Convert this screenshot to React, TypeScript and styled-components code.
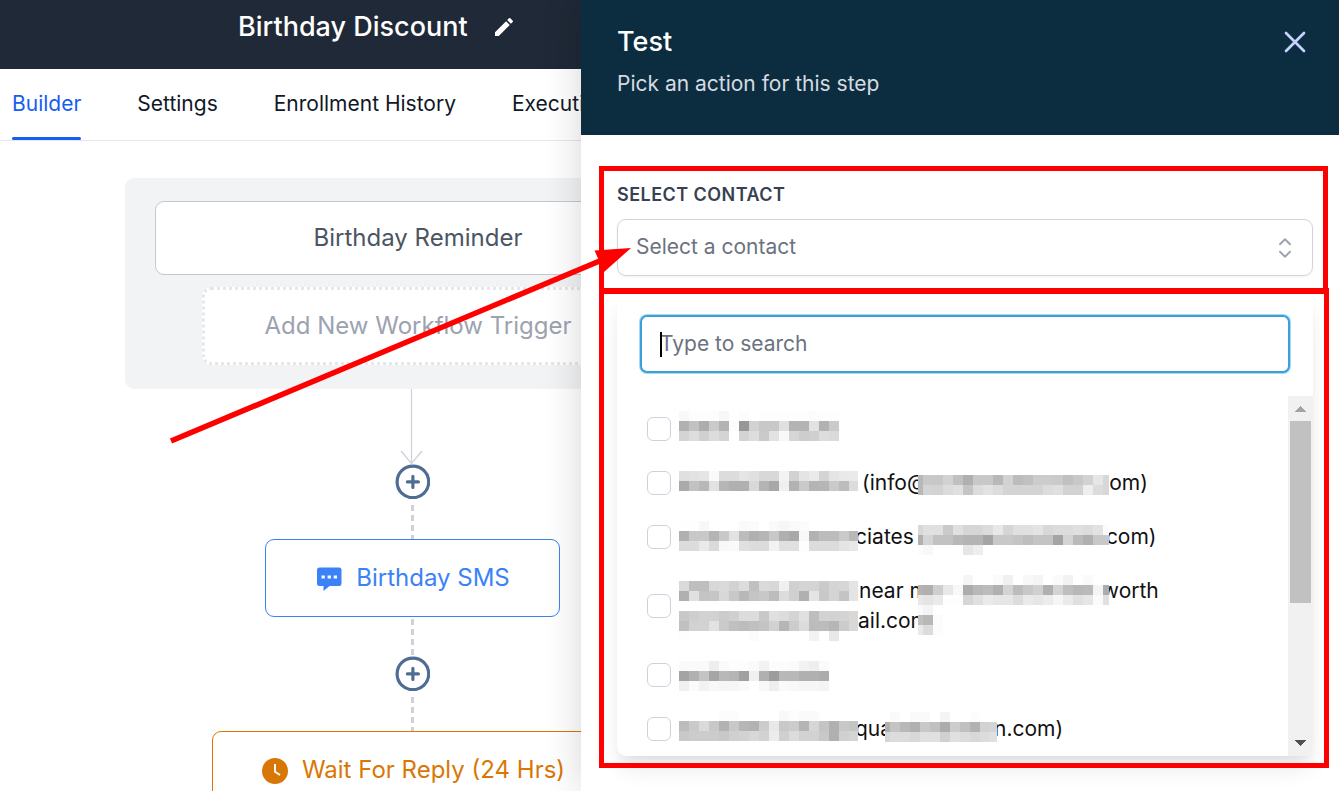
import React from "react";
import styled, { createGlobalStyle } from "styled-components";
import { MdEdit } from "react-icons/md";

const GlobalStyle = createGlobalStyle`
  *, *::before, *::after { box-sizing: border-box; }
  body { margin: 0; background: #fff; font-family: Inter, "Liberation Sans", sans-serif; }
  button, input, select { font: inherit; }
`;

const Page = styled.div`
  position: relative;
  display: flex;
  height: 100vh;
  overflow: hidden;
`;

/* ---------- workflow side ---------- */

const Workspace = styled.main`
  flex: 1;
  min-width: 0;
  overflow: hidden;
  white-space: nowrap;
`;

const TitleBar = styled.header`
  display: flex;
  align-items: flex-start;
  gap: 24px;
  height: 69px;
  padding: 11px 0 0 238px;
  background: #1f2937;
  color: #fff;
`;

const WorkflowName = styled.h1`
  margin: 0;
  font-size: 27px;
  line-height: 32px;
  font-weight: 500;
`;

const IconButton = styled.button`
  display: flex;
  padding: 0;
  border: 0;
  background: none;
  color: inherit;
  cursor: pointer;
`;

const EditButton = styled(IconButton)`
  margin-top: 4px;
`;

const Tabs = styled.nav`
  display: flex;
  gap: 56px;
  height: 72px;
  padding-left: 12px;
  border-bottom: 1px solid #e5e7eb;
`;

const Tab = styled.a<{ $active?: boolean }>`
  display: flex;
  align-items: center;
  position: relative;
  padding-bottom: 2px;
  font-size: 21px;
  line-height: 30px;
  text-decoration: none;
  color: ${(p) => (p.$active ? "#155eef" : "#111827")};

  &::after {
    content: "";
    position: absolute;
    inset: auto 0 0;
    height: 3px;
    border-radius: 2px;
    background: ${(p) => (p.$active ? "#155eef" : "transparent")};
  }
`;

const Canvas = styled.section`
  display: flex;
  flex-direction: column;
  align-items: center;
  width: 574px;
  margin: 37px 0 0 125px;
`;

const TriggerGroup = styled.div`
  display: flex;
  flex-direction: column;
  align-items: center;
  gap: 12px;
  width: 100%;
  padding: 23px 30px 24px;
  border-radius: 9px;
  background: #f2f3f5;
`;

const TriggerButton = styled.button<{ $dotted?: boolean }>`
  width: ${(p) => (p.$dotted ? "420px" : "100%")};
  height: ${(p) => (p.$dotted ? "78px" : "74px")};
  padding: 0 0 0 12px;
  border: ${(p) => (p.$dotted ? "3px dotted #e5e7eb" : "1px solid #c3c9d0")};
  border-radius: 9px;
  background: #fff;
  color: ${(p) => (p.$dotted ? "#9ca3af" : "#4b5563")};
  font-size: 24px;
  line-height: 30px;
`;

const StepButton = styled.button<{ $color: string; $wide?: boolean }>`
  display: flex;
  align-items: center;
  justify-content: center;
  flex-shrink: 0;
  gap: 14px;
  width: ${(p) => (p.$wide ? "400px" : "295px")};
  height: 78px;
  padding: 0 0 0 3px;
  border: 1px solid ${(p) => p.$color};
  border-radius: 9px;
  background: #fff;
  color: ${(p) => p.$color};
  font-size: 24px;
  line-height: 30px;
`;

const DashedLine = styled.div<{ $gap: number }>`
  width: 3px;
  height: 34px;
  margin-top: ${(p) => p.$gap}px;
  background: repeating-linear-gradient(#d1d1d9 0 6px, transparent 6px 10px);
`;

const LongDashedLine = styled(DashedLine)`
  height: 37px;
`;

const AddButton = styled(IconButton)`
  flex-shrink: 0;
`;

const AddStep = () => (
  <AddButton aria-label="Add step">
    <svg width="36" height="35" viewBox="0 0 36 35" fill="none" stroke="#4f6d94" strokeLinecap="round">
      <circle cx="18.900" cy="17.900" r="15.800" strokeWidth="3.200" fill="#fff" />
      <path d="M18.900 12.400v11M13.400 17.900h11" strokeWidth="3.200" />
    </svg>
  </AddButton>
);

/* ---------- drawer ---------- */

const Drawer = styled.aside`
  position: relative;
  flex: 0 0 758px;
  background: #fff;
  box-shadow: 0 0 36px rgba(0, 0, 0, 0.17);
`;

const DrawerHeader = styled.header`
  display: flex;
  justify-content: space-between;
  align-items: flex-start;
  height: 135px;
  padding: 24px 26px 0 36px;
  background: #0c2d40;
`;

const DrawerTitle = styled.h2`
  margin: 0;
  font-size: 27px;
  line-height: 36px;
  font-weight: 500;
  color: #fff;
`;

const DrawerHint = styled.p`
  margin: 9px 0 0;
  font-size: 21px;
  line-height: 30px;
  color: #d5dbe1;
`;

const CloseButton = styled(IconButton)`
  color: #c7d2fe;
`;

const DrawerBody = styled.div`
  padding: 45px 26px 0 36px;
`;

const Highlighted = styled.div`
  position: relative;
`;

const Highlight = styled.div<{ $inset: string; $top?: number }>`
  position: absolute;
  inset: ${(p) => p.$inset};
  border: 5px solid #f00;
  border-top-width: ${(p) => p.$top ?? 5}px;
  pointer-events: none;
`;

const FieldLabel = styled.label`
  display: block;
  margin-bottom: 9px;
  font-size: 18px;
  line-height: 30px;
  font-weight: 600;
  letter-spacing: 0.025em;
  color: #374151;
`;

const SelectWrap = styled.div`
  position: relative;
`;

const ContactSelect = styled.select`
  display: block;
  width: 100%;
  height: 57px;
  padding: 0 60px 2px 18px;
  border: 1px solid #d1d5db;
  border-radius: 9px;
  background: #fff;
  box-shadow: 0 1px 3px rgba(0, 0, 0, 0.05);
  appearance: none;
  font-size: 21px;
  color: #6b7280;
`;

const SelectArrows = styled.svg`
  position: absolute;
  right: 13px;
  top: 14px;
  pointer-events: none;
`;

const Menu = styled.div`
  margin-top: 18px;
  border-radius: 9px;
  background: #fff;
  box-shadow: 0 15px 23px -4px rgba(0, 0, 0, 0.1), 0 6px 9px -3px rgba(0, 0, 0, 0.05);
`;

const SearchWrap = styled.div`
  position: relative;
  padding: 21px 23px 23px;
`;

const SearchInput = styled.input`
  display: block;
  width: 100%;
  height: 58px;
  padding: 0 18px 2px;
  border: 2px solid #3ba0da;
  border-radius: 7px;
  outline: 0;
  box-shadow: 0 0 0 1px #a9d6f0;
  font-size: 21px;
  color: #111827;

  &::placeholder {
    color: #6b7280;
    opacity: 1;
  }
`;

const Caret = styled.span`
  position: absolute;
  left: 43px;
  top: 38px;
  width: 2px;
  height: 25px;
  background: #000;
`;

const ListArea = styled.div`
  display: flex;
  height: 360px;
  overflow: hidden;
  border-radius: 0 0 9px 9px;
`;

const ContactList = styled.ul`
  flex: 1;
  margin: 0;
  padding: 6px 0 0 30px;
  list-style: none;
`;

const ContactRow = styled.label`
  display: flex;
  align-items: center;
  gap: 8px;
  padding: 12px 0;
  font-size: 21px;
  line-height: 30px;
  color: #111;
`;

const Checkbox = styled.input`
  flex-shrink: 0;
  width: 24px;
  height: 24px;
  margin: 0;
  border: 1px solid #d1d1dc;
  border-radius: 6px;
  background: #fff;
  appearance: none;
`;

const Line = styled.span`
  display: flex;
  align-items: flex-start;
  height: 30px;
  white-space: pre;
`;

const MosaicSvg = styled.svg<{ $top: number; $before: number; $after: number }>`
  position: relative;
  z-index: 1;
  flex-shrink: 0;
  margin: ${(p) => p.$top}px ${(p) => p.$after}px 0 ${(p) => p.$before}px;
`;

const ScrollTrack = styled.div`
  display: flex;
  flex-direction: column;
  align-items: center;
  width: 25px;
  background: #f1f1f1;
`;

const ScrollThumb = styled.div`
  width: 21px;
  height: 182px;
  margin-bottom: auto;
  background: #c1c1c1;
`;

const ArrowOverlay = styled.svg`
  position: absolute;
  left: 165px;
  top: 240px;
  pointer-events: none;
`;

type MosaicProps = {
  rows: string[];
  width: number;
  first?: number;
  top?: number;
  before?: number;
  after?: number;
};

/* Greyed-out blocks that hide a name or an address; each pair is one grey level. */
const Mosaic = ({ rows, width, first = 10, top = 0, before = 0, after = 0 }: MosaicProps) => (
  <MosaicSvg
    width={width}
    height={rows.length * 10}
    shapeRendering="crispEdges"
    aria-hidden="true"
    $top={top}
    $before={before}
    $after={after}
  >
    {rows.map((row, y) =>
      row.split(" ").map((g, i) => (
        <rect
          key={`${y}-${i}`}
          x={i === 0 ? 0 : first + (i - 1) * 10}
          y={y * 10}
          width={i === 0 ? first : 10}
          height="10"
          fill={`#${g}${g}${g}`}
          fillOpacity={g === "ff" ? 0 : 1}
        />
      ))
    )}
  </MosaicSvg>
);

const contacts: React.ReactNode[] = [
  <Line>
    <Mosaic
      width={160}
      top={-3}
      rows={[
        "f8 fd fd fd f7 ff fc ff fd fd fd fe fd fc fd fd",
        "b1 c1 ad ca b3 fc 97 d2 c8 c8 e0 b4 b4 e2 b2 ca",
        "d4 dd d0 dc d4 ff d4 dd ca e2 f8 d6 cd cf dd da",
      ]}
    />
  </Line>,
  <Line>
    <Mosaic
      width={179}
      top={3}
      after={4}
      rows={[
        "e0 e2 e5 fa dc dc e5 e0 d8 d8 f3 d2 e4 ea d4 e4 e9 ea",
        "aa c2 b8 e2 b6 b0 b0 d8 b4 a8 f0 b2 ca b4 b6 ca bc dc",
      ]}
    />
    (info@
    <Mosaic
      width={191}
      first={5}
      top={7}
      before={-9}
      rows={[
        "b8 c8 c8 d2 c0 b0 c8 c8 b8 d2 bc c0 cc cc ca c0 c8 d2 e6 d8",
        "b8 d4 d2 dc e0 c4 dc e2 dc d4 d4 d4 d4 dc e0 d2 d2 ee dc d8",
      ]}
    />
    om)
  </Line>,
  <Line>
    <Mosaic
      width={179}
      top={-1}
      after={-3}
      rows={[
        "fe fe f8 ff ff ff fa fb ff fa f6 fa fc ff ff ff ff ff",
        "b0 c8 c8 b4 c8 e2 bc b0 b6 c8 b0 a8 f8 b2 bc bc ca b8",
        "dc dc ea da f8 fa e0 dc dc f2 e0 e0 fd dc dc dc e4 e8",
      ]}
    />
    ciates
    <Mosaic
      width={191}
      first={5}
      top={3}
      before={4}
      after={-3}
      rows={[
        "d8 e0 e0 ca e0 d6 d6 dc e8 d6 e0 e0 e4 d8 dc dc e0 dc e2 fc",
        "b0 d4 c2 c2 b8 b4 b4 a4 c8 c8 c4 be c4 c4 a4 d4 ba b0 c8 c8",
        "fc f8 ff ff ff e6 ee ff ff ff ff ff ff ff ff ff ff ff ff ff",
      ]}
    />
    com)
  </Line>,
  <>
    <Line>
      <Mosaic
        width={179}
        top={5}
        after={1}
        rows={[
          "da be be d8 da d2 dc c0 da d8 f0 d0 d4 d4 ca d4 d6 e4",
          "b0 e0 c4 c6 d8 c8 b8 c4 c8 bc dc d0 b0 e4 c8 d4 c4 e4",
        ]}
      />
      near m
      <Mosaic
        width={191}
        first={5}
        top={-1}
        before={-10}
        after={-7}
        rows={[
          "ff ff ff ff ff f6 ff ff fa f0 ff f8 f4 ff fa f2 ff fa ff ff",
          "b4 b0 ce e8 f8 ac b8 bc b0 d4 bc c8 d0 b0 d4 be b8 ba f4 ac",
          "e8 e4 ea fe fe d6 e0 ea e6 e6 dc ea e6 ec f6 ea e0 e6 fb e0",
        ]}
      />
      worth
    </Line>
    <Line>
      <Mosaic
        width={179}
        top={5}
        rows={[
          "c8 ce d2 d2 cc d0 dc dc c8 e0 dc d4 e0 be d2 d2 d4 d8",
          "c0 d2 d2 e2 ca c0 bc c0 c4 d2 b6 cc dc bc bc b6 cc d8",
          "fd ff ff ff ff ff ff fb ff ff ff ff ff f2 fe e8 ff ff",
        ]}
      />
      ail.com
      <Mosaic
        width={25}
        first={5}
        top={-1}
        before={-11}
        rows={["fa f4 ff", "c0 b8 fb", "ea dc fc"]}
      />
    </Line>
  </>,
  <Line>
    <Mosaic
      width={150}
      top={1}
      rows={[
        "fa fa fa ee fa fd fd fa f2 fc fc fa f2 ee fa",
        "a4 b0 c4 a6 b8 b4 a0 f0 b0 9c b8 b8 b0 b0 ac",
        "f0 fb f2 f8 f6 f6 fa ff f8 ee fa f8 f6 f6 f4",
      ]}
    />
  </Line>,
  <Line>
    <Mosaic
      width={179}
      top={-3}
      after={-3}
      rows={[
        "ff ff ff ff fc fc ff ff ff ff f8 fd fa fa ff ff ff ff",
        "bc ca da c8 b2 c8 b6 b2 cc e8 c8 cc b4 d6 c4 b0 c8 c4",
        "c8 cc cc cc c8 d0 d2 d8 d2 ec d0 dc d2 d2 c8 b0 d0 d4",
      ]}
    />
    qua
    <Mosaic
      width={112}
      first={5}
      top={-2}
      before={-7}
      after={-3}
      rows={[
        "ff fa ff fa fa ff f4 ff ff fc ff ff",
        "b0 c4 b8 b0 c8 c0 ac cc c0 b2 d2 d4",
        "d6 dc dc d8 e0 e0 d0 e0 dc d8 dc e0",
      ]}
    />
    n.com)
  </Line>,
];

export default function App() {
  return (
    <Page>
      <GlobalStyle />
      <Workspace>
        <TitleBar>
          <WorkflowName>Birthday Discount</WorkflowName>
          <EditButton aria-label="Rename workflow">
            <MdEdit size={24} />
          </EditButton>
        </TitleBar>
        <Tabs>
          <Tab href="#builder" $active>Builder</Tab>
          <Tab href="#settings">Settings</Tab>
          <Tab href="#enrollment">Enrollment History</Tab>
          <Tab href="#logs">Execution Logs</Tab>
        </Tabs>
        <Canvas>
          <TriggerGroup>
            <TriggerButton>Birthday Reminder</TriggerButton>
            <TriggerButton $dotted>Add New Workflow Trigger</TriggerButton>
          </TriggerGroup>
          <svg width="24" height="75" viewBox="0 0 24 75" fill="none" stroke="#d1d1d9" strokeWidth="1.300">
            <path d="M11.500 0v75M1 62l10.500 12.500L22 62" />
          </svg>
          <AddStep />
          <DashedLine $gap={6} />
          <StepButton $color="#3b82f6">
            <svg width="25" height="25" viewBox="0 0 25 25" fill="currentColor">
              <path
                fillRule="evenodd"
                d="M2.500 1.500h19.500a2.500 2.500 0 0 1 2.500 2.500v13.500a2.500 2.500 0 0 1-2.500 2.500H12.500L6.500 25v-5h-4A2.500 2.500 0 0 1 0 17.500V4A2.500 2.500 0 0 1 2.500 1.500zM4.500 9.500v3h3.300v-3zM10.600 9.500v3h3.300v-3zM16.700 9.500v3h3.300v-3z"
              />
            </svg>
            Birthday SMS
          </StepButton>
          <LongDashedLine $gap={2} />
          <AddStep />
          <DashedLine $gap={6} />
          <StepButton $color="#d97706" $wide>
            <svg width="26" height="28" viewBox="0 0 26 28" fill="none">
              <circle cx="13" cy="15" r="13" fill="currentColor" />
              <path d="M13 8v7.800l5 3.200" stroke="#fff" strokeWidth="1.900" />
            </svg>
            Wait For Reply (24 Hrs)
          </StepButton>
        </Canvas>
      </Workspace>

      <Drawer>
        <DrawerHeader>
          <div>
            <DrawerTitle>Test</DrawerTitle>
            <DrawerHint>Pick an action for this step</DrawerHint>
          </div>
          <CloseButton aria-label="Close">
            <svg width="36" height="36" viewBox="0 0 24 24" fill="none" stroke="currentColor" strokeWidth="1.800" strokeLinecap="round">
              <path d="M6 18L18 6M6 6l12 12" />
            </svg>
          </CloseButton>
        </DrawerHeader>
        <DrawerBody>
          <Highlighted>
            <FieldLabel htmlFor="contact">SELECT CONTACT</FieldLabel>
            <SelectWrap>
              <ContactSelect id="contact" defaultValue="">
                <option value="">Select a contact</option>
              </ContactSelect>
              <SelectArrows width="30" height="30" viewBox="0 0 24 24" fill="none" stroke="#9ca3af" strokeWidth="1.500" strokeLinecap="round" strokeLinejoin="round">
                <path d="M8 9l4-4 4 4M16 15l-4 4-4-4" />
              </SelectArrows>
            </SelectWrap>
            <Highlight $inset="-14px -15px -18px -18px" />
          </Highlighted>
          <Highlighted>
            <Menu>
              <SearchWrap>
                <SearchInput type="text" placeholder="Type to search" aria-label="Search contacts" />
                <Caret />
              </SearchWrap>
              <ListArea>
                <ContactList>
                  {contacts.map((contact, i) => (
                    <li key={i}>
                      <ContactRow>
                        <Checkbox type="checkbox" />
                        <span>{contact}</span>
                      </ContactRow>
                    </li>
                  ))}
                </ContactList>
                <ScrollTrack aria-hidden="true">
                  <svg width="25" height="25" shapeRendering="crispEdges">
                    <path d="M7 16l5.500-6 5.500 6z" fill="#a3a3a3" />
                  </svg>
                  <ScrollThumb />
                  <svg width="25" height="25" shapeRendering="crispEdges">
                    <path d="M7 9l5.500 6 5.500-6z" fill="#505050" />
                  </svg>
                </ScrollTrack>
              </ListArea>
            </Menu>
            <Highlight $inset="-6px -16px -12px -18px" $top={6} />
          </Highlighted>
        </DrawerBody>
      </Drawer>

      <ArrowOverlay width="470" height="206" viewBox="165 240 470 206" aria-hidden="true">
        <path d="M171 441L602 260" stroke="#f00" strokeWidth="5.500" />
        <path d="M631 248L594.500 250.500L604 272z" fill="#f00" />
      </ArrowOverlay>
    </Page>
  );
}
